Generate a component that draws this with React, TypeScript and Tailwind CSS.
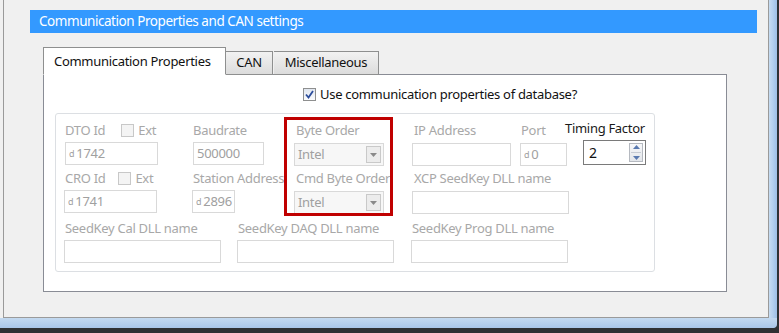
import React from "react";

const font = { fontFamily: '"Noto Sans", "Open Sans", sans-serif' };

function Check({ checked, disabled }: { checked?: boolean; disabled?: boolean }) {
  return (
    <span
      className={`inline-flex items-center justify-center w-[13px] h-[13px] border ${
        disabled ? "border-[#c8c8c8] bg-[#f4f4f4]" : "border-[#8e8f8f] bg-gradient-to-b from-[#e0e6ef] to-[#fafbfd]"
      }`}
    >
      {checked && (
        <svg width="9" height="9" viewBox="0 0 9 9">
          <path d="M1 4.5 L3.5 7.5 L8 1" fill="none" stroke="#2b4c9b" strokeWidth="1.8" />
        </svg>
      )}
    </span>
  );
}

function TextBox({ w, value, prefix }: { w: string; value?: string; prefix?: boolean }) {
  return (
    <div className={`${w} h-[23px] border border-[#d9d9d9] bg-white flex items-center pl-[3px] text-[#a0a0a0]`}>
      {prefix && <span className="text-[9px] mr-[2px] leading-none">d</span>}
      {value && <span className="text-[13px] leading-none">{value}</span>}
    </div>
  );
}

function Combo() {
  return (
    <div className="w-[90px] h-[23px] border border-[#d9d9d9] bg-[#f7f7f7] flex items-center justify-between pl-[3px] pr-[2px] text-[#a0a0a0]">
      <span className="text-[13px] leading-none">Intel</span>
      <span className="w-[15px] h-[17px] border border-[#c9c9c9] bg-[#ececec] flex items-center justify-center">
        <svg width="7" height="4" viewBox="0 0 7 4">
          <path d="M0 0 L7 0 L3.5 4 Z" fill="#8a8a8a" />
        </svg>
      </span>
    </div>
  );
}

function Label({ children, dark }: { children: React.ReactNode; dark?: boolean }) {
  return (
    <div className={`h-[18px] text-[13px] leading-[18px] whitespace-nowrap ${dark ? "text-[#1a1a1a]" : "text-[#a8a8a8]"}`}>
      {children}
    </div>
  );
}

export default function App() {
  return (
    <div className="w-[779px] h-[333px] bg-[#2f3133] relative overflow-hidden tracking-[-0.3px]" style={font}>
      <div className="flex h-[328px]">
        {/* window content */}
        <div className="w-[769px] h-[318px] bg-[#f0f0f0] flex">
          <div className="w-[3px] h-[318px] bg-[#f0f0f0]" />
          <div className="w-[766px] h-[318px] border-l border-r border-b border-[#9a9a9a] flex flex-col">
            {/* header */}
            <div className="ml-[26px] mt-[10px] w-[727px] h-[23px] bg-[#3399ff] flex items-center pl-[9px] text-white text-[13.5px] tracking-[-0.45px] leading-none">
              Communication Properties and CAN settings
            </div>
            {/* tabs */}
            <div className="ml-[39px] mt-[14px] flex items-end h-[28px] relative z-10">
              <div className="w-[183px] h-[28px] bg-white border border-[#8e8f8f] border-b-white flex items-start pt-[4px] pl-[10px] text-[13px] text-[#111]">
                Communication Properties
              </div>
              <div className="w-[47px] h-[24px] border border-[#8e8f8f] border-l-0 bg-gradient-to-b from-[#f2f2f2] to-[#dcdcdc] flex items-center justify-center text-[13px] text-[#111]">
                CAN
              </div>
              <div className="w-[105px] h-[24px] border border-[#8e8f8f] border-l-0 bg-gradient-to-b from-[#f2f2f2] to-[#dcdcdc] flex items-center justify-center text-[13px] text-[#111] ml-[1px]">
                Miscellaneous
              </div>
            </div>
            {/* tab panel */}
            <div className="ml-[39px] -mt-[1px] w-[684px] h-[218px] bg-white border border-[#898c95] flex flex-col">
              <div className="h-[38px] flex items-center pl-[259px] pt-[1px] gap-[4px]">
                <Check checked />
                <span className="text-[13px] text-[#111] leading-none">Use communication properties of database?</span>
              </div>
              <div className="ml-[11px] w-[600px] h-[159px] border border-[#dcdfe3] rounded-[3px] flex flex-col pl-[9px] pt-[7px]">
                {/* row 1 */}
                <div className="flex h-[47px]">
                  <div className="w-[128px] flex flex-col">
                    <div className="flex items-center">
                      <Label>DTO Id</Label>
                      <span className="ml-[16px] flex items-center gap-[4px]">
                        <Check disabled />
                        <Label>Ext</Label>
                      </span>
                    </div>
                    <div className="mt-[3px]">
                      <TextBox w="w-[93px]" value="1742" prefix />
                    </div>
                  </div>
                  <div className="w-[101px] flex flex-col">
                    <Label>Baudrate</Label>
                    <div className="mt-[3px]">
                      <TextBox w="w-[71px]" value="500000" />
                    </div>
                  </div>
                  <div className="w-[119px] flex flex-col">
                    <div className="pl-[2px]">
                      <Label>Byte Order</Label>
                    </div>
                    <div className="mt-[4px]">
                      <Combo />
                    </div>
                  </div>
                  <div className="w-[108px] flex flex-col">
                    <div className="pl-[1px]">
                      <Label>IP Address</Label>
                    </div>
                    <div className="mt-[4px] -ml-[1px]">
                      <TextBox w="w-[99px]" />
                    </div>
                  </div>
                  <div className="w-[44px] flex flex-col">
                    <Label>Port</Label>
                    <div className="mt-[4px] -ml-[1px]">
                      <TextBox w="w-[47px]" value="0" prefix />
                    </div>
                  </div>
                  <div className="flex flex-col -mt-[2px]">
                    <Label dark>Timing Factor</Label>
                    <div className="mt-[3px] ml-[18px] w-[63px] h-[25px] border border-[#7a7a7a] bg-white flex items-center justify-between pl-[5px] pr-[2px]">
                      <span className="text-[14px] text-[#111] leading-none">2</span>
                      <span className="w-[14px] h-[19px] border border-[#b5b9c0] bg-gradient-to-b from-[#f7f8fa] to-[#e3e6ea] flex flex-col items-center justify-around">
                        <svg width="7" height="4" viewBox="0 0 7 4">
                          <path d="M0 4 L7 4 L3.5 0 Z" fill="#5a7ab0" />
                        </svg>
                        <span className="w-[10px] h-[1px] bg-[#c6cbd3]" />
                        <svg width="7" height="4" viewBox="0 0 7 4">
                          <path d="M0 0 L7 0 L3.5 4 Z" fill="#5a7ab0" />
                        </svg>
                      </span>
                    </div>
                  </div>
                </div>
                {/* row 2 */}
                <div className="flex h-[50px] mt-[1px]">
                  <div className="w-[128px] flex flex-col">
                    <div className="flex items-center">
                      <Label>CRO Id</Label>
                      <span className="ml-[13px] flex items-center gap-[4px]">
                        <Check disabled />
                        <Label>Ext</Label>
                      </span>
                    </div>
                    <div className="mt-[3px] -ml-[1px]">
                      <TextBox w="w-[93px]" value="1741" prefix />
                    </div>
                  </div>
                  <div className="w-[101px] flex flex-col">
                    <Label>Station Address</Label>
                    <div className="mt-[3px] -ml-[1px]">
                      <TextBox w="w-[43px]" value="2896" prefix />
                    </div>
                  </div>
                  <div className="w-[119px] flex flex-col">
                    <div className="pl-[2px]">
                      <Label>Cmd Byte Order</Label>
                    </div>
                    <div className="mt-[4px]">
                      <Combo />
                    </div>
                  </div>
                  <div className="flex flex-col">
                    <div className="pl-[1px]">
                      <Label>XCP SeedKey DLL name</Label>
                    </div>
                    <div className="mt-[4px] -ml-[1px]">
                      <TextBox w="w-[157px]" />
                    </div>
                  </div>
                </div>
                {/* row 3 */}
                <div className="flex">
                  <div className="w-[173px] flex flex-col">
                    <Label>SeedKey Cal DLL name</Label>
                    <div className="mt-[3px] -ml-[1px]">
                      <TextBox w="w-[157px]" />
                    </div>
                  </div>
                  <div className="w-[174px] flex flex-col">
                    <Label>SeedKey DAQ DLL name</Label>
                    <div className="mt-[3px] -ml-[1px]">
                      <TextBox w="w-[157px]" />
                    </div>
                  </div>
                  <div className="flex flex-col">
                    <Label>SeedKey Prog DLL name</Label>
                    <div className="mt-[3px] -ml-[1px]">
                      <TextBox w="w-[157px]" />
                    </div>
                  </div>
                </div>
              </div>
            </div>
          </div>
        </div>
        {/* right window frame */}
        <div className="w-[8px] h-[328px] bg-gradient-to-r from-[#c7dcf1] via-[#b3cfee] to-[#9ebfe6] rounded-br-[4px]" />
      </div>
      {/* bottom frame */}
      <div className="absolute left-0 top-[318px] w-[777px] h-[10px] bg-gradient-to-b from-[#c3d9f0] via-[#b6d0ec] to-[#a9c6e8] rounded-br-[5px]" />
      {/* red annotation box */}
      <div className="absolute left-[284px] top-[117px] w-[109px] h-[99px] border-[3px] border-[#c00000]" />
    </div>
  );
}
